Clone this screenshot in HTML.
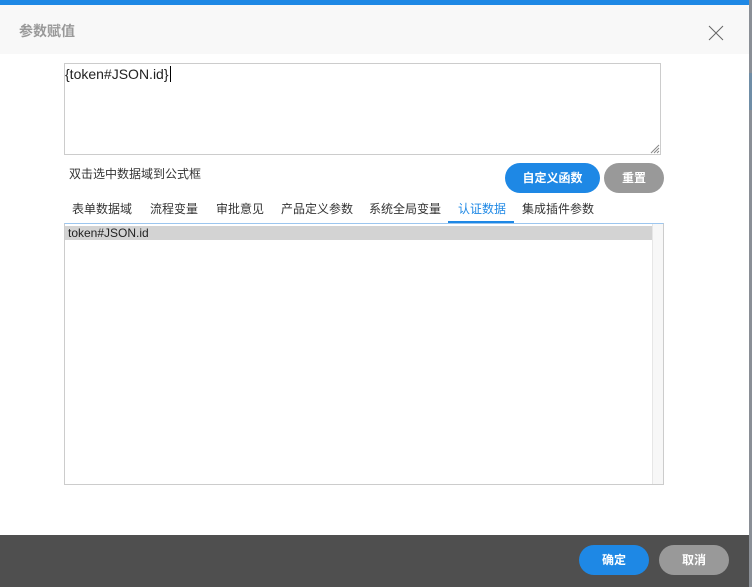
<!DOCTYPE html>
<html><head><meta charset="utf-8"><style>
*{margin:0;padding:0;box-sizing:border-box}
body{width:752px;height:587px;position:relative;overflow:hidden;background:#fff;font-family:"Liberation Sans","Noto Sans CJK SC",sans-serif;font-size:12px;color:#333}
.a{position:absolute;white-space:nowrap}
.tab{position:absolute;top:200px;font-size:12px;color:#333}
</style></head><body>
<div class="a" style="left:749px;top:0;width:3px;height:587px;background:#8a8f96"></div>
<div class="a" style="left:749px;top:73px;width:3px;height:37px;background:#6f8da6"></div>
<div class="a" style="left:0;top:0;width:749px;height:5px;background:#1e88e5"></div>
<div class="a" style="left:0;top:5px;width:749px;height:49px;background:#f8f8f8"></div>
<div class="a" style="left:19px;top:21px;font-size:14px;color:#999;font-weight:bold">参数赋值</div>
<svg class="a" style="left:708px;top:25px" width="16" height="16"><path d="M1 1L15 15M15 1L1 15" stroke="#666" stroke-width="1"/></svg>
<div class="a" style="left:64px;top:63px;width:597px;height:92px;border:1px solid #ccc"></div>
<div class="a" style="left:65px;top:66px;font-size:14px;color:#222">{token#JSON.id}<span style="border-left:1px solid #000;margin-left:1px"></span></div>
<svg class="a" style="left:650px;top:144px" width="10" height="10"><path d="M9 1L1 9M9 4L4 9M9 7L7 9" stroke="#888"/></svg>
<div class="a" style="left:69px;top:165px;font-size:12px;color:#333">双击选中数据域到公式框</div>
<div class="a" style="left:505px;top:163px;width:95px;height:30px;border-radius:15px;background:#1e88e5;color:#fff;font-weight:bold;text-align:center;line-height:30px">自定义函数</div>
<div class="a" style="left:604px;top:163px;width:60px;height:30px;border-radius:15px;background:#999;color:#fff;font-weight:bold;text-align:center;line-height:30px">重置</div>
<div class="tab" style="left:72px">表单数据域</div>
<div class="tab" style="left:150px">流程变量</div>
<div class="tab" style="left:216px">审批意见</div>
<div class="tab" style="left:281px">产品定义参数</div>
<div class="tab" style="left:369px">系统全局变量</div>
<div class="tab" style="left:458px;color:#1e88e5">认证数据</div>
<div class="tab" style="left:522px">集成插件参数</div>
<div class="a" style="left:448px;top:221px;width:66px;height:2px;background:#1e88e5"></div>
<div class="a" style="left:64px;top:223px;width:600px;height:262px;border:1px solid #ccc;border-top:1px solid #9cc6ef"></div>
<div class="a" style="left:65px;top:226px;width:587px;height:14px;background:#d3d3d3"></div>
<div class="a" style="left:68px;top:226px;font-size:12px;color:#222;line-height:14px">token#JSON.id</div>
<div class="a" style="left:652px;top:224px;width:11px;height:260px;background:#f7f7f7;border-left:1px solid #e6e6e6"></div>
<div class="a" style="left:0;top:535px;width:749px;height:52px;background:#4f4f4f"></div>
<div class="a" style="left:579px;top:545px;width:70px;height:30px;border-radius:15px;background:#1e88e5;color:#fff;font-weight:bold;text-align:center;line-height:30px">确定</div>
<div class="a" style="left:659px;top:545px;width:70px;height:30px;border-radius:15px;background:#999;color:#fff;font-weight:bold;text-align:center;line-height:30px">取消</div>
</body></html>
